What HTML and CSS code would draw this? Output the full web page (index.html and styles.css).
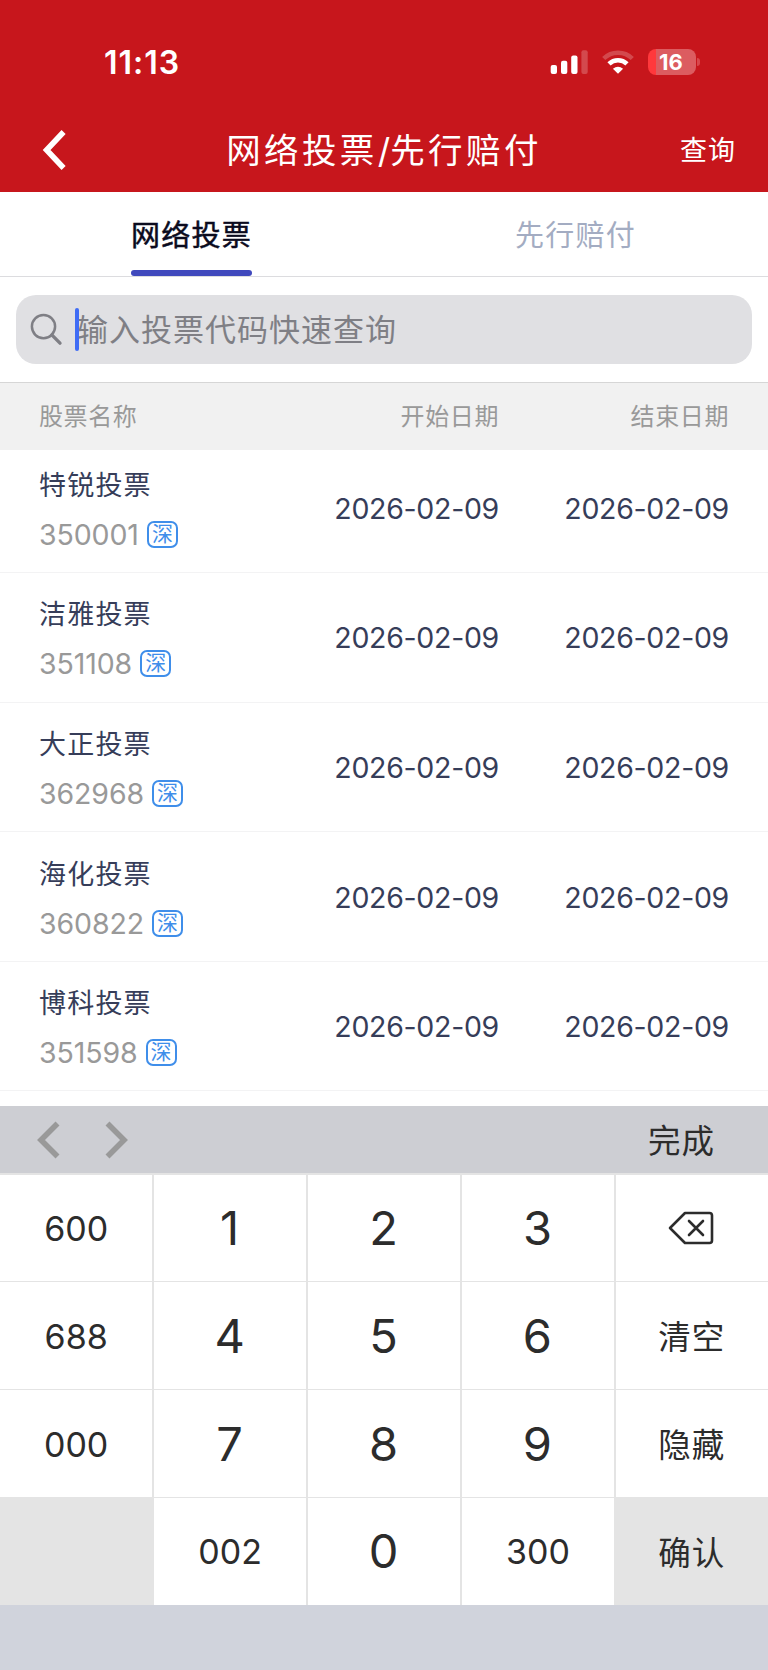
FILE: index.html
```html
<!DOCTYPE html>
<html lang="zh-CN">
<head>
  <meta charset="UTF-8" />
  <meta name="viewport" content="width=device-width, initial-scale=1.0"/>
  <title>网络投票/先行赔付</title>
  <link rel="stylesheet" href="styles.css">
</head>
<body>
  <div class="app">
    <!-- Header -->
    <header class="header">
      <div class="status">
        <span class="time">11:13</span>
        <div class="status-icons">
          <svg width="38" height="28" viewBox="0 0 38 28" fill="#fff">
            <rect x="0.7" y="17" width="6.3" height="9" rx="2"/>
            <rect x="11" y="12.7" width="6.3" height="13.3" rx="2"/>
            <rect x="21.2" y="7.5" width="6.3" height="18.5" rx="2"/>
            <rect x="31.4" y="2.3" width="6.3" height="23.7" rx="2" opacity="0.22"/>
          </svg>
          <svg width="32" height="28" viewBox="0 0 32 28" fill="none" stroke="#fff">
            <path d="M1.7 10.5A20.5 20.5 0 0 1 30.3 10.5" stroke-width="4.5" opacity="0.22"/>
            <path d="M7 15.8A13 13 0 0 1 25 15.8" stroke-width="4.6"/>
            <path d="M16 25.8L10.9 20.8Q16 16.6 21.1 20.8Z" fill="#fff" stroke="none"/>
          </svg>
          <div class="battery"><span>16</span></div>
        </div>
      </div>
      <div class="navbar">
        <svg class="back" width="28" height="42" viewBox="0 0 28 42" fill="none" stroke="#fff" stroke-width="5.6">
          <path d="M23.6 3L6.6 21L23.6 39"/>
        </svg>
        <h1>网络投票<span class="slash">/</span>先行赔付</h1>
        <a class="query">查询</a>
      </div>
    </header>

    <!-- Tabs -->
    <nav class="tabs">
      <div class="tab active"><span>网络投票</span></div>
      <div class="tab"><span>先行赔付</span></div>
    </nav>

    <div class="search">
      <div class="search-box">
        <svg width="34" height="34" viewBox="0 0 34 34" fill="none" stroke="#7f7f85" stroke-linecap="round">
          <circle cx="14.5" cy="13.6" r="11.6" stroke-width="2.5"/>
          <path d="M22.8 21.9L31 30.1" stroke-width="3.4"/>
        </svg>
        <span class="caret"></span>
        <input type="text" placeholder="输入投票代码快速查询" />
      </div>
    </div>

    <!-- Vote list -->
    <div class="grid list-head">
      <span>股票名称</span>
      <span>开始日期</span>
      <span>结束日期</span>
    </div>
    <div class="list">
      <div class="list-inner">
        <div class="grid row">
          <div>
            <div class="name">特锐投票</div>
            <div class="code">350001<i class="badge">深</i></div>
          </div>
          <span class="date">2026-02-09</span>
          <span class="date">2026-02-09</span>
        </div>
        <div class="grid row">
          <div>
            <div class="name">洁雅投票</div>
            <div class="code">351108<i class="badge">深</i></div>
          </div>
          <span class="date">2026-02-09</span>
          <span class="date">2026-02-09</span>
        </div>
        <div class="grid row">
          <div>
            <div class="name">大正投票</div>
            <div class="code">362968<i class="badge">深</i></div>
          </div>
          <span class="date">2026-02-09</span>
          <span class="date">2026-02-09</span>
        </div>
        <div class="grid row">
          <div>
            <div class="name">海化投票</div>
            <div class="code">360822<i class="badge">深</i></div>
          </div>
          <span class="date">2026-02-09</span>
          <span class="date">2026-02-09</span>
        </div>
        <div class="grid row">
          <div>
            <div class="name">博科投票</div>
            <div class="code">351598<i class="badge">深</i></div>
          </div>
          <span class="date">2026-02-09</span>
          <span class="date">2026-02-09</span>
        </div>
      </div>
    </div>

    <!-- Keyboard -->
    <div class="keyboard">
      <div class="toolbar">
        <svg width="94" height="38" viewBox="0 0 94 38" fill="none" stroke="#999" stroke-width="5.6">
          <path d="M22.5 2.5L6 19L22.5 35.5"/>
          <path d="M72.5 2.5L89 19L72.5 35.5"/>
        </svg>
        <span>完成</span>
      </div>
      <div class="keys">
        <button>600</button>
        <button class="num">1</button>
        <button class="num">2</button>
        <button class="num">3</button>
        <button class="del">
          <svg width="46" height="34" viewBox="0 0 46 34" fill="none" stroke="#2c2c2c" stroke-width="2.6" stroke-linejoin="round" stroke-linecap="round">
            <path d="M17 2H41.5Q44 2 44 4.5V29.5Q44 32 41.5 32H17L2 17Z"/>
            <path d="M21 10L35 24M35 10L21 24"/>
          </svg>
        </button>
        <button>688</button>
        <button class="num">4</button>
        <button class="num">5</button>
        <button class="num">6</button>
        <button class="cn">清空</button>
        <button>000</button>
        <button class="num">7</button>
        <button class="num">8</button>
        <button class="num">9</button>
        <button class="cn">隐藏</button>
        <button class="gray"></button>
        <button>002</button>
        <button class="num">0</button>
        <button>300</button>
        <button class="cn gray">确认</button>
      </div>
    </div>
  </div>
</body>
</html>
```
FILE: styles.css
```css
* { box-sizing: border-box; }
body { margin: 0; font-family: Inter, 'Noto Sans CJK SC', sans-serif; background: #fff; }
svg { display: block; flex: none; }
.app { width: 768px; height: 1670px; display: flex; flex-direction: column; overflow: hidden; }

/* Header */
.header { height: 192px; background: #c7161c; color: #fff; flex: none; }
.status { height: 108px; padding: 16px 72px 0 104px; display: flex; align-items: center; justify-content: space-between; }
.time { font-size: 32px; font-weight: 600; letter-spacing: 1px; }
.status-icons { display: flex; align-items: center; gap: 14px; }
.battery { position: relative; width: 48px; height: 26px; border-radius: 8px; background: linear-gradient(90deg, #ff383c 8px, #dc5c60 8px); text-align: center; line-height: 26px; font-size: 22px; font-weight: 700; padding-right: 2px; }
.battery::after { content: ""; position: absolute; right: -4px; top: 9px; width: 3px; height: 8px; border-radius: 0 3px 3px 0; background: #d8474c; }
.navbar { height: 84px; display: flex; align-items: center; padding: 0 32px 0 40px; }
.navbar h1 { flex: 1; margin: 0; text-align: center; font-size: 34.5px; font-weight: 400; letter-spacing: 3.4px; padding: 0 0 5px 20px; }
.slash { letter-spacing: 0; }
.query { font-size: 27px; letter-spacing: 1px; padding-bottom: 3px; }

/* Tabs */
.tabs { height: 85px; display: flex; border-bottom: 1px solid #dcdcdf; flex: none; }
.tab { flex: 1; display: flex; justify-content: center; color: #a3acc2; font-size: 29px; letter-spacing: 1.2px; line-height: 80px; }
.tab span { position: relative; right: 0.5px; padding-top: 4px; }
.tab.active { color: #0b0b1e; -webkit-text-stroke: 0.5px #0b0b1e; }
.tab.active span::after { content: ""; position: absolute; left: 0; right: 0; bottom: 0; height: 6px; border-radius: 3px; background: #4049bd; }

/* Search */
.search { height: 106px; padding: 18px 16px; border-bottom: 1px solid #d6d6d6; flex: none; }
.search-box { position: relative; height: 69px; display: flex; align-items: center; border-radius: 20px; background: #e0e0e3; padding-left: 13px; }
.search-box input { flex: 1; height: 60px; margin-left: 14px; padding: 0; border: none; outline: none; background: none; font-family: inherit; font-size: 31px; letter-spacing: 1px; }
.search-box input::placeholder { color: #7f7f85; }
.caret { position: absolute; left: 59px; top: 13px; width: 4px; height: 43px; border-radius: 2px; background: #3f6cf5; }

/* List */
.grid { display: grid; grid-template-columns: 1fr 230px 230px; align-items: center; padding: 0 39px; }
.grid > span { text-align: right; }
.list-head { height: 67px; padding-bottom: 4px; background: #f1f1f1; color: #999; font-size: 24px; letter-spacing: 0.6px; flex: none; }
.list-head span:first-child { text-align: left; }
.list { height: 656px; overflow: hidden; flex: none; }
.list-inner { margin-top: -6.5px; }
.row { height: 129.6px; border-bottom: 1.5px solid #f3f3f4; }
.name { font-size: 27px; letter-spacing: 1.2px; line-height: 50px; padding-top: 3px; color: #363d59; }
.code { display: flex; align-items: center; height: 47px; font-size: 28.5px; letter-spacing: -0.1px; color: #999; }
.badge { width: 31px; height: 27px; margin-left: 8px; border: 2px solid #3f8eea; border-radius: 7px; color: #3f8eea; font-size: 21px; font-style: normal; line-height: 22px; text-align: center; }
.date { font-size: 28.5px; letter-spacing: -0.3px; padding-top: 1px; color: #363d59; }

/* Keyboard */
.keyboard { flex: 1; background: #d0d3dc; }
.toolbar { height: 67px; display: flex; align-items: center; justify-content: space-between; padding: 0 53px 0 35px; background: #cdced3; color: #2c2c2c; font-size: 32.5px; letter-spacing: 1px; }
.toolbar span { padding-bottom: 2px; }
.keys { display: grid; grid-template-columns: repeat(5, 1fr); grid-auto-rows: 106.3px; gap: 1.6px; padding-top: 1.6px; background: #e4e4e4; }
.keys button { display: flex; align-items: center; justify-content: center; padding: 1px 0 0; border: none; background: #fff; color: #2c2c2c; font-family: inherit; font-size: 34px; }
.keys .num { font-size: 47px; padding: 0 1px 1px 0; }
.keys .cn { font-size: 32.5px; letter-spacing: 1px; padding: 0 0 2px; }
.keys .del { padding-right: 1px; }
.keys .gray { background: #e4e4e4; }
```
